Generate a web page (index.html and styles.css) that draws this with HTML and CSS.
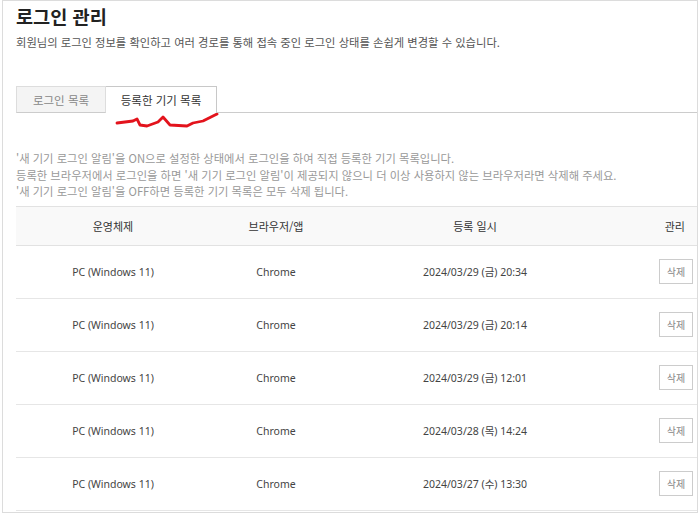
FILE: index.html
```html
<!DOCTYPE html>
<html lang="ko">
<head>
    <meta charset="UTF-8">
    <meta name="viewport" content="width=device-width, initial-scale=1.0">
    <title>로그인 관리</title>
    <link rel="stylesheet" href="styles.css">
</head>
<body>
    <div class="frame">
        <h1 class="title">로그인 관리</h1>
        <p class="desc">회원님의 로그인 정보를 확인하고 여러 경로를 통해 접속 중인 로그인 상태를 손쉽게 변경할 수 있습니다.</p>

        <div class="tabs">
            <div class="tab">로그인 목록</div>
            <div class="tab active">
                등록한 기기 목록
                <svg class="scribble" width="110" height="16" viewBox="0 0 110 16">
                    <path d="M2 10 L18 8 L22 6 L25 12 L32 13 L43 9 L48 4 L55 12 L72 13 L78 10 L88 8 L102 1" fill="none" stroke="#e3131c" stroke-width="2.8" stroke-linejoin="round" stroke-linecap="round"/>
                </svg>
            </div>
            <div class="tab-rest"></div>
        </div>

        <div class="notice">
            <p>'새 기기 로그인 알림'을 ON으로 설정한 상태에서 로그인을 하여 직접 등록한 기기 목록입니다.</p>
            <p>등록한 브라우저에서 로그인을 하면 '새 기기 로그인 알림'이 제공되지 않으니 더 이상 사용하지 않는 브라우저라면 삭제해 주세요.</p>
            <p>'새 기기 로그인 알림'을 OFF하면 등록한 기기 목록은 모두 삭제 됩니다.</p>
        </div>

        <table class="devices">
            <thead>
                <tr>
                    <th class="col-os">운영체제</th>
                    <th class="col-browser">브라우저/앱</th>
                    <th class="col-date">등록 일시</th>
                    <th class="col-manage"><span>관리</span></th>
                </tr>
            </thead>
            <tbody>
                <tr>
                    <td>PC (Windows 11)</td>
                    <td>Chrome</td>
                    <td>2024/03/29 (금) 20:34</td>
                    <td class="col-manage"><button class="del">삭제</button></td>
                </tr>
                <tr>
                    <td>PC (Windows 11)</td>
                    <td>Chrome</td>
                    <td>2024/03/29 (금) 20:14</td>
                    <td class="col-manage"><button class="del">삭제</button></td>
                </tr>
                <tr>
                    <td>PC (Windows 11)</td>
                    <td>Chrome</td>
                    <td>2024/03/29 (금) 12:01</td>
                    <td class="col-manage"><button class="del">삭제</button></td>
                </tr>
                <tr>
                    <td>PC (Windows 11)</td>
                    <td>Chrome</td>
                    <td>2024/03/28 (목) 14:24</td>
                    <td class="col-manage"><button class="del">삭제</button></td>
                </tr>
                <tr>
                    <td>PC (Windows 11)</td>
                    <td>Chrome</td>
                    <td>2024/03/27 (수) 13:30</td>
                    <td class="col-manage"><button class="del">삭제</button></td>
                </tr>
            </tbody>
        </table>
    </div>
</body>
</html>
```
FILE: styles.css
```css
body {
    margin: 0;
    font-family: "Noto Sans CJK KR", "Noto Sans", sans-serif;
    background-color: #fff;
    color: #333;
}

.frame {
    box-sizing: border-box;
    margin-left: 2px;
    width: 696px;
    height: 513px;
    border: 1px solid #dcdcdc;
    padding-left: 13px;
    overflow: hidden;
}

.title {
    margin: 0;
    padding-top: 2px;
    font-size: 18.6px;
    line-height: 26px;
    font-weight: bold;
    color: #222;
}

.desc {
    margin: 4px 0 0;
    font-size: 11.3px;
    line-height: 18px;
    color: #555;
}

.tabs {
    display: flex;
    margin-top: 35px;
    height: 27px;
}

.tab {
    position: relative;
    width: 88px;
    border: 1px solid #ddd;
    border-bottom-color: #ccc;
    background-color: #f4f4f4;
    color: #888;
    font-size: 11.5px;
    line-height: 26px;
    text-align: center;
}

.tab.active {
    width: 110px;
    border-color: #c8c8c8;
    border-left: none;
    border-bottom: none;
    background-color: #fff;
    color: #333;
}

.tab-rest {
    flex: 1;
    border-bottom: 1px solid #ccc;
}

.scribble {
    position: absolute;
    left: 9px;
    top: 26px;
}

.notice {
    margin-top: 37px;
    font-size: 11.3px;
    line-height: 16.5px;
    color: #999;
}

.notice p {
    margin: 0;
}

.devices {
    margin-top: 6px;
    width: 681px;
    border-collapse: collapse;
    table-layout: fixed;
    font-family: "Noto Sans", "Noto Sans CJK KR", sans-serif;
    font-size: 10.5px;
    color: #444;
}

.devices th {
    height: 38px;
    background-color: #f9f9f9;
    border-top: 1px solid #e2e2e2;
    border-bottom: 1px solid #e2e2e2;
    font-family: "Noto Sans CJK KR", sans-serif;
    font-size: 11px;
    font-weight: normal;
    color: #333;
    padding: 0;
}

.devices td {
    height: 52px;
    border-bottom: 1px solid #e6e6e6;
    text-align: center;
    padding: 0;
}

.col-os {
    width: 194px;
}

.col-browser {
    width: 132px;
}

.col-date {
    width: 266px;
}

.devices .col-manage {
    text-align: right;
    padding-right: 4px;
}

.col-manage span {
    padding-right: 8px;
}

.del {
    width: 34px;
    height: 25px;
    padding: 0;
    border: 1px solid #ccc;
    background-color: #fff;
    color: #888;
    font-family: "Noto Sans CJK KR", sans-serif;
    font-size: 10px;
    cursor: pointer;
}
```
